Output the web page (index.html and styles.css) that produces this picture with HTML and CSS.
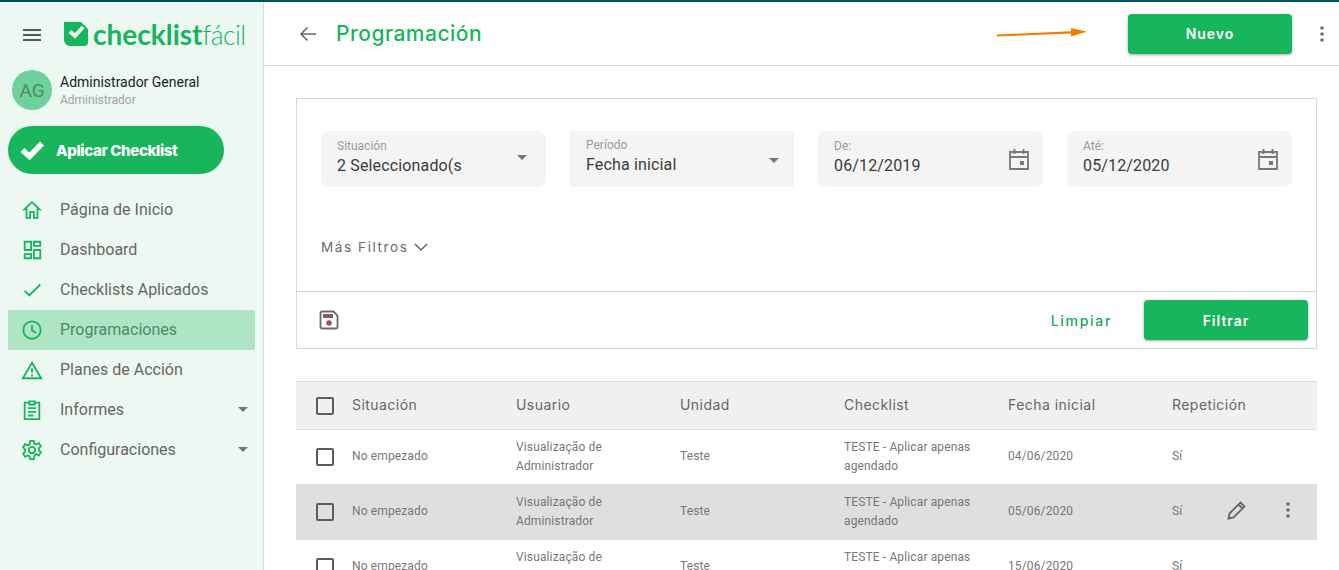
FILE: index.html
```html
<!DOCTYPE html>
<html lang="es">
<head>
<meta charset="utf-8">
<title>Programación</title>
<link rel="stylesheet" href="styles.css">
</head>
<body>
<div class="topline"></div>
<div class="app">
  <aside class="sidebar">
    <div class="brand">
      <svg class="burger" viewBox="0 0 18 12"><path d="M0 1h18M0 6h18M0 11h18" stroke="#222" stroke-width="1.6" fill="none"/></svg>
      <svg class="logo-mark" viewBox="0 0 24 24"><path d="M0 0h17l7 7v13a4 4 0 0 1-4 4H6a6 6 0 0 1-6-6z" fill="#17b55c"/><path d="M6 9.500l5 4.500 8-9" stroke="#eef8f3" stroke-width="4" fill="none"/></svg>
      <span class="logo-text"><b>checklist</b><span class="logo-thin">fácil</span></span>
    </div>
    <div class="user">
      <div class="avatar">AG</div>
      <div class="user-info">
        <div class="user-name">Administrador General</div>
        <div class="user-role">Administrador</div>
      </div>
    </div>
    <button class="apply"><svg viewBox="0 0 24 20"><path d="M2.500 10l7 6.500L22 3.500" stroke="#fff" stroke-width="5.500" fill="none"/></svg>Aplicar Checklist</button>
    <nav class="menu">
      <a class="item"><svg viewBox="0 0 24 24"><path d="M2.500 12.500L12 3.500l9.500 9M6 10v10.500h4v-6.500h4v6.500h4V10" class="ic"/></svg><span>Página de Inicio</span></a>
      <a class="item"><svg viewBox="0 0 24 24"><path d="M4 3h7v9H4zM14 3h7v4.500h-7zM14 12h7v9h-7zM4 16.500h7V21H4z" class="ic"/></svg><span>Dashboard</span></a>
      <a class="item"><svg viewBox="0 0 24 24"><path d="M4 13l5 5L21 6" class="ic"/></svg><span>Checklists Aplicados</span></a>
      <a class="item active"><svg viewBox="0 0 24 24"><circle cx="12" cy="12" r="9.500" class="ic"/><path d="M12 6.500V12.500l4.500 2.500" class="ic"/></svg><span>Programaciones</span></a>
      <a class="item"><svg viewBox="0 0 24 24"><path d="M12 4L2 21h20zM12 10v5M12 17v2" class="ic"/></svg><span>Planes de Acción</span></a>
      <a class="item"><svg viewBox="0 0 24 24"><path d="M9 4H4v18h16V4h-5M9 2.500h6V6H9zM7.500 10h9M7.500 14h9M7.500 18h6" class="ic"/></svg><span>Informes</span><i class="caret"></i></a>
      <a class="item"><svg viewBox="0 0 24 24"><circle cx="12" cy="12" r="3.500" class="ic"/><path d="M10 2h4l.6 3 2.200 1 2.700-1.600 2.200 3.600-2.300 2 .1 2.400 2.200 2-2.200 3.600-2.700-1.500-2 1.200L14 22h-4l-.6-3-2.200-1-2.700 1.500-2.200-3.600 2.300-2v-2.400L2.300 9l2.200-3.600 2.700 1.600 2.200-1.200z" class="ic"/></svg><span>Configuraciones</span><i class="caret"></i></a>
    </nav>
  </aside>
  <main class="main">
    <header class="bar">
      <svg class="back" viewBox="0 0 18 16"><path d="M17 8H2M8.500 1.500L2 8l6.500 6.500" stroke="#666" stroke-width="1.500" fill="none"/></svg>
      <h1>Programación</h1>
      <button class="btn new">Nuevo</button>
      <svg class="dots" viewBox="0 0 4 16"><circle cx="2" cy="2" r="1.800"/><circle cx="2" cy="8" r="1.800"/><circle cx="2" cy="14" r="1.800"/></svg>
      <svg class="annot" viewBox="0 0 90 10"><path d="M0 6.500L74 3.200V0L90 3.800 74 8.500V5.600L0 8.500z" fill="#f57c00"/></svg>
    </header>
    <div class="content">
      <section class="filters">
        <div class="fields">
          <div class="field"><label>Situación</label><div class="val">2 Seleccionado(s</div><i class="caret big"></i></div>
          <div class="field alt"><label>Período</label><div class="val">Fecha inicial</div><i class="caret big"></i></div>
          <div class="field"><label>De:</label><div class="val">06/12/2019</div><svg class="cal" viewBox="0 0 20 22"><path d="M1 4h18v17H1zM1 9h18M5.500 1v5M14.500 1v5" stroke="#777" stroke-width="1.800" fill="none"/><rect x="11" y="13" width="4" height="4" fill="#777"/></svg></div>
          <div class="field"><label>Até:</label><div class="val">05/12/2020</div><svg class="cal" viewBox="0 0 20 22"><path d="M1 4h18v17H1zM1 9h18M5.500 1v5M14.500 1v5" stroke="#777" stroke-width="1.800" fill="none"/><rect x="11" y="13" width="4" height="4" fill="#777"/></svg></div>
        </div>
        <div class="more">Más Filtros<svg viewBox="0 0 14 8"><path d="M1 1l6 6 6-6" stroke="#666" stroke-width="1.500" fill="none"/></svg></div>
        <div class="actions">
          <svg class="save" viewBox="0 0 20 20"><path d="M1.500 3a1.500 1.500 0 0 1 1.500-1.500h11.500L18.500 5.500V17a1.500 1.500 0 0 1-1.500 1.500H3A1.500 1.500 0 0 1 1.500 17z" stroke="#6a6a6a" stroke-width="1.800" fill="none"/><rect x="4" y="4" width="10" height="4" fill="#8a5a60"/><circle cx="10" cy="13" r="2.800" fill="#8a5a60"/></svg>
          <span class="clear">Limpiar</span>
          <button class="btn filter">Filtrar</button>
        </div>
      </section>
      <section class="table">
        <div class="row head">
          <span class="check"></span><span>Situación</span><span>Usuario</span><span>Unidad</span><span>Checklist</span><span>Fecha inicial</span><span>Repetición</span>
        </div>
        <div class="row">
          <span class="check"></span><span>No empezado</span><span>Visualização de Administrador</span><span>Teste</span><span>TESTE - Aplicar apenas agendado</span><span>04/06/2020</span><span>Sí</span>
        </div>
        <div class="row hover">
          <span class="check"></span><span>No empezado</span><span>Visualização de Administrador</span><span>Teste</span><span>TESTE - Aplicar apenas agendado</span><span>05/06/2020</span><span>Sí</span>
          <div class="row-tools">
            <svg class="pen" viewBox="0 0 20 20"><path d="M1.500 18.500l1-5L13.500 2.500l4 4-11 11zM11.500 4.500l4 4" stroke="#666" stroke-width="1.800" fill="none"/></svg>
            <svg class="dots" viewBox="0 0 4 16"><circle cx="2" cy="2" r="1.800"/><circle cx="2" cy="8" r="1.800"/><circle cx="2" cy="14" r="1.800"/></svg>
          </div>
        </div>
        <div class="row">
          <span class="check"></span><span>No empezado</span><span>Visualização de Administrador</span><span>Teste</span><span>TESTE - Aplicar apenas agendado</span><span>15/06/2020</span><span>Sí</span>
        </div>
      </section>
    </div>
  </main>
</div>
</body>
</html>
```
FILE: styles.css
```css
* { box-sizing: border-box; }
html, body { margin: 0; height: 570px; overflow: hidden; background: #fff; }
body { font-family: Roboto, "Liberation Sans", sans-serif; color: #666; }
.topline { height: 2px; background: #03505f; }
.app { display: flex; height: 568px; }

.sidebar { width: 264px; flex: none; background: #eef8f3; border-right: 1px solid #dcdcdc; padding-top: 20px; }
.brand { display: flex; align-items: center; height: 24px; padding-left: 23px; }
.burger { width: 18px; height: 12px; margin-top: 1px; }
.logo-mark { width: 24px; height: 24px; margin-left: 23px; }
.logo-text { font-family: Lato, sans-serif; font-size: 28px; color: #17b55c; margin-left: 5px; }
.logo-text b { font-weight: 700; }
.logo-thin { font-weight: 300; letter-spacing: -.6px; font-size: 26.500px; }
.user { display: flex; align-items: center; margin: 24px 0 0 12px; }
.avatar { width: 40px; height: 40px; border-radius: 50%; background: #6fd09a; color: #4b8b68; font-size: 19px; display: flex; align-items: center; justify-content: center; }
.user-info { margin-left: 8px; }
.user-name { font-size: 14px; line-height: 20px; color: #222; margin-top: -1px; }
.user-role { font-size: 12px; line-height: 15px; color: #a2a2a2; margin-top: 1px; }
.apply { display: flex; align-items: center; width: 216px; height: 48px; margin: 16px 0 0 8px; padding: 0 0 0 12px; border: 0; border-radius: 24px; background: #17b55c; color: #fff; font-family: Inter, sans-serif; font-weight: 800; font-size: 15px; letter-spacing: -.35px; }
.apply svg { width: 24px; height: 20px; margin-right: 12px; }
.menu { margin-top: 16px; }
.item { position: relative; display: flex; align-items: center; height: 40px; margin: 0 8px; padding-left: 13px; border-radius: 2px; font-size: 16px; color: #666; }
.item span { margin-top: -2px; }
.item svg { width: 22px; height: 22px; margin-right: 17px; flex: none; }
.item.active { background: #ade5c5; color: #4d8a69; }
.ic { stroke: #17b55c; stroke-width: 2; fill: none; }
.caret { display: block; width: 0; height: 0; border: 5px solid transparent; border-top-color: #777; border-bottom: 0; }
.item .caret { position: absolute; right: 7px; top: 17px; }

.main { flex: 1; min-width: 0; }
.bar { position: relative; display: flex; align-items: center; height: 64px; border-bottom: 1px solid #dcdcdc; padding: 0 15px 0 35px; }
.back { width: 18px; height: 16px; flex: none; }
h1 { margin: 0 0 0 19px; font-family: Inter, sans-serif; font-weight: 500; font-size: 21px; color: #17b55c; letter-spacing: .5px; }
.btn { border: 0; border-radius: 4px; background: #17b55c; color: #fff; font-family: Inter, sans-serif; font-weight: 600; font-size: 14px; letter-spacing: 1px; width: 164px; height: 40px; box-shadow: 0 1px 3px rgba(0,0,0,.35); }
.new { margin-left: auto; margin-right: 28px; }
.dots { width: 4px; height: 16px; fill: #6d6d6d; flex: none; }
.annot { position: absolute; left: 733px; top: 26px; width: 90px; height: 10px; }

.content { padding: 32px 22px 0 32px; }
.filters { border: 1px solid #d8d8d8; height: 251px; display: flex; flex-direction: column; }
.fields { display: grid; grid-template-columns: 225px 224px 225px 225px; gap: 24px; padding: 32px 24px 0; }
.field { position: relative; height: 56px; background: #f4f4f4; border-radius: 8px; padding: 8px 16px 0; }
.field.alt { padding-top: 7px; border-radius: 2px; }
.field label { display: block; font-size: 12px; line-height: 15px; color: #9a9a9a; }
.val { font-size: 16px; line-height: 20px; color: #3c3c3c; margin-top: 2px; letter-spacing: .15px; }
.field .caret.big { position: absolute; right: 19px; top: 24px; }
.field.alt .caret.big { right: 15px; top: 27px; }
.cal { position: absolute; right: 14px; top: 17px; width: 20px; height: 22px; }
.more { display: flex; align-items: center; margin: 50px 0 0 24px; height: 20px; font-family: Inter, sans-serif; font-size: 13.500px; letter-spacing: 1.600px; color: #6b6b6b; }
.more svg { width: 14px; height: 8px; margin-left: 5px; }
.actions { display: flex; align-items: center; margin-top: auto; height: 57px; border-top: 1px solid #d8d8d8; padding: 0 8px 0 22px; }
.save { width: 20px; height: 20px; }
.clear { margin-left: auto; margin-right: 32px; font-family: Inter, sans-serif; font-weight: 500; font-size: 14px; letter-spacing: 1.700px; color: #17a95a; }

.table { margin-top: 32px; }
.row { position: relative; display: grid; grid-template-columns: 56px repeat(6, 164px); align-items: center; height: 55px; border-bottom: 1px solid #e2e2e2; font-size: 12px; line-height: 19px; color: #777; letter-spacing: .13px; }
.row > span:not(.check) { padding-right: 14px; }
.row > span:nth-child(2), .row > span:nth-child(4), .row > span:nth-child(6), .row > span:nth-child(7) { padding-bottom: 2px; }
.row.head > span:not(.check) { padding-bottom: 2px; }
.row.head { height: 49px; background: #f0f0f0; border-top: 1px solid #dcdcdc; font-family: Inter, sans-serif; font-size: 14px; color: #666; letter-spacing: .45px; }
.row.hover { background: #dfdfdf; }
.check { width: 18px; height: 18px; margin-left: 20px; border: 2px solid #5c5c5c; border-radius: 2px; background: transparent; }
.row-tools { position: absolute; top: 15px; left: 931px; display: flex; align-items: center; gap: 39px; }
.pen { width: 20px; height: 20px; }
```
